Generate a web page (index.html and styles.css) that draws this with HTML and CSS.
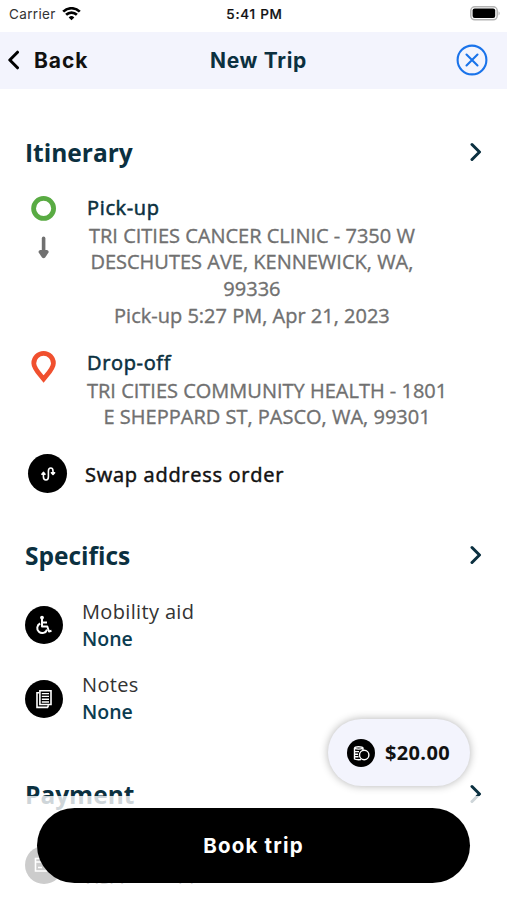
FILE: index.html
```
<!DOCTYPE html>
<html lang="en">
<head>
<meta charset="utf-8">
<title>New Trip</title>
<link rel="stylesheet" href="styles.css">
</head>
<body>

<!-- status bar -->
<div class="status">
	<div class="carrier">
		<span>Carrier</span>
		<svg width="19" height="14" viewBox="0 0 19 14" fill="none" stroke="#000" stroke-width="2.7">
			<path d="M1.2 4.6A12 12 0 0 1 17.8 4.6M4.1 7.8A7.8 7.8 0 0 1 14.9 7.8"/>
			<path d="M9.5 13.2L6.7 10.4A4 4 0 0 1 12.3 10.4Z" fill="#000" stroke="none"/>
		</svg>
	</div>
	<div class="clock">5:41 PM</div>
	<svg class="battery" width="31" height="15" viewBox="0 0 31 15">
		<rect x="0.8" y="0.8" width="26.4" height="13" rx="4" fill="#fff" stroke="#b3b3b3" stroke-width="1.5"/>
		<rect x="2.6" y="2.6" width="22.6" height="9.4" rx="2" fill="#000"/>
		<path d="M28.6 5.2Q30.6 7.3 28.6 9.4Z" fill="#aaa"/>
	</svg>
</div>

<!-- nav bar -->
<header class="navbar">
	<div class="back">
		<svg width="13" height="20" viewBox="0 0 13 20" fill="none" stroke="#000" stroke-width="3" stroke-linecap="round" stroke-linejoin="round"><path d="M11.5 2.2L3.8 10L11.5 17.8"/></svg>
		<span>Back</span>
	</div>
	<h1>New Trip</h1>
	<svg class="close" width="32" height="32" viewBox="0 0 32 32" fill="none" stroke="#1a73ea" stroke-width="2.1" stroke-linecap="round">
		<circle cx="16" cy="16" r="14.4"/><path d="M10.5 10.5L21.5 21.5M21.5 10.5L10.5 21.5"/>
	</svg>
</header>

<main>
	<!-- itinerary -->
	<section class="itinerary">
		<div class="heading">
			<h2>Itinerary</h2>
			<svg class="chevron" viewBox="0 0 12 20"><path d="M2 2.5L9.5 10L2 17.5"/></svg>
		</div>
		<div class="stop pickup">
			<div class="marker">
				<svg width="26" height="64" viewBox="0 0 26 64">
					<circle cx="12.6" cy="13.4" r="10" fill="none" stroke="#59ab43" stroke-width="4.8"/>
					<path d="M12.6 43.4V57" stroke="#707070" stroke-width="3.6" stroke-linecap="round"/>
					<path d="M9.2 55H16Q18.6 55.8 17.2 58L14.2 62.4Q12.6 64 11 62.4L8 58Q6.6 55.8 9.2 55Z" fill="#707070"/>
				</svg>
			</div>
			<div class="place">
				<h3>Pick-up</h3>
				<p>TRI CITIES CANCER CLINIC - 7350 W<br>DESCHUTES AVE, KENNEWICK, WA,<br>99336<br>Pick-up 5:27 PM, Apr 21, 2023</p>
			</div>
		</div>
		<div class="stop dropoff">
			<div class="marker">
				<svg width="26" height="34" viewBox="0 0 26 34"><path d="M12.6 3.4A9.8 9.8 0 0 1 22.4 13.2C22.4 18.5 17.1 23.5 12.6 29C8.1 23.5 2.8 18.5 2.8 13.2A9.8 9.8 0 0 1 12.6 3.4Z" fill="none" stroke="#f0502f" stroke-width="4.8"/></svg>
			</div>
			<div class="place">
				<h3>Drop-off</h3>
				<p>TRI CITIES COMMUNITY HEALTH - 1801<br>E SHEPPARD ST, PASCO, WA, 99301</p>
			</div>
		</div>
		<div class="swap">
			<div class="disc large">
				<svg width="16" height="16" viewBox="0 0 16 16" fill="none" stroke="#fff" stroke-width="1.6" stroke-linejoin="round" stroke-linecap="round">
					<path d="M3.4 7.2V10.8Q3.4 14 6 14Q8.4 14 8.4 10.8V5Q8.4 2 10.8 2Q13 2 13 5V7"/>
					<path d="M1.9 8.2L3.4 6.4L5 8.2ZM11.4 6.8H14.6L13 8.5Z" fill="#fff"/>
				</svg>
			</div>
			<span>Swap address order</span>
		</div>
	</section>

	<!-- specifics -->
	<section class="specifics">
		<div class="heading">
			<h2>Specifics</h2>
			<svg class="chevron" viewBox="0 0 12 20"><path d="M2 2.5L9.5 10L2 17.5"/></svg>
		</div>
		<div class="option">
			<div class="disc">
				<svg width="18" height="20" viewBox="0 0 18 20" fill="none" stroke="#fff" stroke-width="2" stroke-linejoin="round">
					<circle cx="7" cy="2.6" r="1.9" fill="#fff" stroke="none"/>
					<path d="M7 4V11.5H12.3L14 16.5L16.5 15.8M7 7.5H12"/>
					<path d="M5.2 8.5A5 5 0 1 0 12 14.6"/>
				</svg>
			</div>
			<div>
				<div class="label">Mobility aid</div>
				<div class="value">None</div>
			</div>
		</div>
		<div class="option">
			<div class="disc">
				<svg width="18" height="20" viewBox="0 0 18 20" fill="none" stroke="#fff" stroke-width="1.6">
					<path d="M4.9 1.7H16V15.5H4.9ZM4 3.8H2V18.4H12.5L13.5 16.3"/>
					<path d="M6.8 4.6H14M6.8 7.4H14M6.8 10.2H14M6.8 13H14" stroke-width="1.4"/>
				</svg>
			</div>
			<div>
				<div class="label">Notes</div>
				<div class="value">None</div>
			</div>
		</div>
	</section>

	<!-- payment, mostly behind the footer -->
	<section class="payment">
		<div class="heading">
			<h2>Payment</h2>
			<svg class="chevron" viewBox="0 0 12 20"><path d="M2 2.5L9.5 10L2 17.5"/></svg>
		</div>
		<div class="option">
			<div class="disc">
				<svg width="20" height="16" viewBox="0 0 20 16" fill="none" stroke="#fff" stroke-width="1.6"><path d="M1.5 1.5H18.5V14H1.5ZM1.5 5H18.5M4 10.5H8"/></svg>
			</div>
			<div class="card">VISA &nbsp;•••• &nbsp;11</div>
		</div>
	</section>
</main>

<div class="footer">
	<button class="book">Book trip</button>
</div>

<div class="price">
	<svg width="28" height="28" viewBox="0 0 28 28">
		<circle cx="14" cy="14" r="14" fill="#000"/>
		<g fill="none" stroke="#fff" stroke-width="1.4">
			<path d="M7.5 9V20Q9 21 14 20.6M7.5 9Q8 7.7 11.5 7.7Q15.5 7.7 16 9V11M7.5 9.4Q11.5 10.8 16 9.4M7.5 12.6H12M7.5 15.2H11M7.5 17.8H11.5"/>
			<circle cx="17.2" cy="16" r="4.7"/>
		</g>
	</svg>
	<span>$20.00</span>
</div>

</body>
</html>
```
FILE: styles.css
```
* {box-sizing:border-box;}
body {margin:0; position:relative; height:900px; overflow:hidden; background:#fff; font-family:"Open Sans",sans-serif; font-size:20px; line-height:26.7px; color:#111;}
h1, h2, h3, p {margin:0;}
svg {display:block; flex:none;}

/* status bar */
.status {display:grid; grid-template-columns:1fr auto 1fr; align-items:center; height:32px; padding:0 6px 5px 9px; font-family:Inter,sans-serif; font-size:13.5px; line-height:18px;}
.carrier {display:flex; align-items:center; gap:6px; color:#333; letter-spacing:0.35px;}
.clock {margin-right:1px; font-weight:500; color:#111; letter-spacing:0.75px; -webkit-text-stroke:0.2px #111;}
.battery {justify-self:end;}

/* nav bar */
.navbar {display:grid; grid-template-columns:1fr auto 1fr; align-items:center; height:57px; padding:0 19px 0 6px; background:#f3f4fd; font-family:Inter,sans-serif;}
.back {display:flex; align-items:center; gap:15px; font-size:21px; font-weight:700; letter-spacing:0.95px; color:#111;}
.navbar h1 {margin:2px 0 0 23px; font-size:21px; font-weight:700; letter-spacing:0.7px; color:#0b3040;}
.back span {padding-top:2px;}
.close {justify-self:end; margin-top:-1px;}

main {padding:0 25px;}
.heading {display:flex; align-items:center; justify-content:space-between; height:34px;}
.heading h2 {padding-top:1px; font-size:24.5px; line-height:34px; font-weight:700; color:#0b3040;}
.chevron {width:12px; height:20px; fill:none; stroke:#0b3040; stroke-width:3; stroke-linecap:round; stroke-linejoin:round;}

/* itinerary */
.itinerary {padding-top:46px;}
.stop {display:flex;}
.marker {width:62px; padding-left:6px;}
.place h3 {font-size:20px; line-height:26.7px; font-weight:400; letter-spacing:0.65px; color:#0b3040; -webkit-text-stroke:0.55px #0b3040;}
.place p {text-align:center; white-space:nowrap; color:#707070; -webkit-text-stroke:0.35px #707070;}
.pickup {margin-top:26px;}
.pickup p {padding:0.9px 0 0 2px;}
.dropoff {margin-top:20.7px;}
.dropoff p {padding-top:0.9px;}
.swap {display:flex; align-items:center; gap:18px; margin-top:23.2px; padding-left:3px;}
.swap span {padding-top:3px; letter-spacing:0.72px; -webkit-text-stroke:0.5px #111;}
.disc {display:flex; align-items:center; justify-content:center; flex:none; width:38px; height:38px; border-radius:50%; background:#000;}
.disc.large {width:39px; height:39px;}

/* specifics */
.specifics {padding-top:45px;}
.option {display:flex; align-items:center; gap:19px; margin-top:19.5px;}
.specifics .heading {margin-bottom:26px;}
.label {padding-top:0.6px; letter-spacing:0.35px; color:#333;}
.value {font-size:19.5px; font-weight:600; color:#0b3c50;}

/* payment */
.payment {padding-top:51.5px;}
.payment .option {margin-top:28px;}
.card {padding-top:25px; color:#333;}

/* floating parts */
.footer {position:absolute; left:0; right:0; bottom:0; height:104px; padding:12px 37px 0; background:rgba(255,255,255,0.8);}
.book {display:block; width:100%; height:75px; border:0; border-radius:38px; background:#000; color:#fff; font-family:Inter,sans-serif; font-size:20.5px; font-weight:700; letter-spacing:1.2px;}
.price {position:absolute; left:328px; top:719px; display:flex; align-items:center; gap:10px; width:142px; height:67px; padding-left:19px; border-radius:34px; background:#f3f4fd; box-shadow:0 0 9px rgba(0,0,0,0.3); font-weight:700; letter-spacing:0.35px;}
.price span {padding-top:2px;}
```
